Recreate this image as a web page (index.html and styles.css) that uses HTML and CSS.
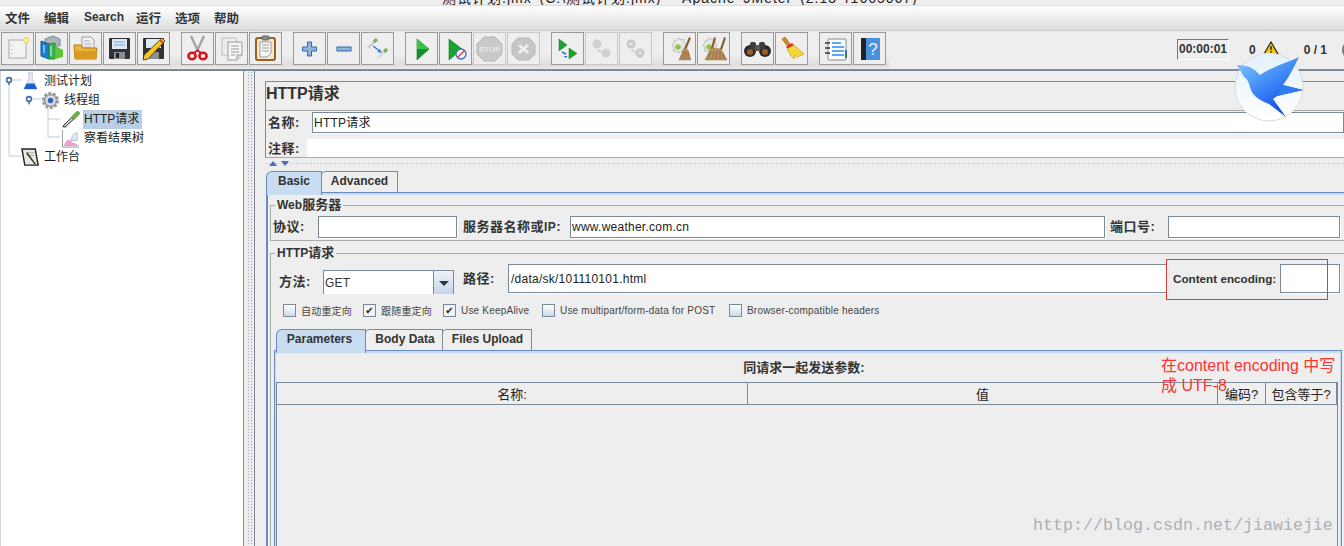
FILE: index.html
```html
<!DOCTYPE html>
<html lang="zh">
<head>
<meta charset="utf-8">
<title>JMeter HTTP请求</title>
<link rel="stylesheet" href="styles.css">
</head>
<body>
<div class="app">
  <div class="titlebar"><span class="titletext">测试计划.jmx (C:\测试计划.jmx) - Apache JMeter (2.13 r1665067)</span></div>
  <nav class="menubar">
    <span>文件</span><span>编辑</span><span class="menulat">Search</span><span>运行</span><span>选项</span><span>帮助</span>
  </nav>
  <div class="toolbar">
    <div class="tools">
    <div class="group">
      <button class="tb"><svg viewBox="0 0 31 31"><rect x="7" y="7" width="17" height="18" fill="#f3f3ef" stroke="#a8a8a8"/><path d="M10 12v1M10 16v1M10 20v1" stroke="#999"/><circle cx="24" cy="7" r="2.6" fill="#fff3a0" stroke="#e8cf50"/></svg></button>
      <button class="tb"><svg viewBox="0 0 31 31"><path d="M9 6l8-3 7 3v7H9z" fill="#a9b4ba" stroke="#7f8c92"/><path d="M5 8l8 3v15l-8-3z" fill="#1b7fd0" stroke="#0f5a9c"/><path d="M13 11l6-1v16l-6 0z" fill="#39b54a" stroke="#1f8a34"/><path d="M19 13l8 4v7l-8 2z" fill="#64c23a"/><path d="M8 12v8M15 13v10" stroke="#d8f0ff"/></svg></button>
      <button class="tb"><svg viewBox="0 0 31 31"><path d="M12 4h9l3 3v10H12z" fill="#f4f4f4" stroke="#999"/><path d="M14 8h6M14 11h8M14 14h8" stroke="#aaa"/><path d="M4 12h7l2 3h14l-1 11H5z" fill="#eeb23a" stroke="#b97c16"/><path d="M4 18h23l-1 8H5z" fill="#d99a25"/></svg></button>
      <button class="tb"><svg viewBox="0 0 31 31"><rect x="5" y="5" width="21" height="21" rx="1" fill="#2f3338"/><rect x="8" y="6" width="15" height="10" fill="#dfe9f5"/><path d="M10 9h11M10 12h11" stroke="#7aa6d6"/><rect x="10" y="19" width="11" height="7" fill="#8a8f94"/><rect x="12" y="20" width="3" height="5" fill="#222"/></svg></button>
      <button class="tb"><svg viewBox="0 0 31 31"><rect x="5" y="5" width="21" height="21" rx="1" fill="#2f3338"/><rect x="8" y="6" width="15" height="9" fill="#dfe9f5"/><rect x="10" y="19" width="11" height="7" fill="#8a8f94"/><path d="M24 5l3 3-17 18-5 1 1-5z" fill="#f3c522" stroke="#3a2c10" stroke-width=".8"/><path d="M22 7l3 3" stroke="#d8482c" stroke-width="2"/></svg></button>
    </div>
    <div class="group">
      <button class="tb"><svg viewBox="0 0 31 31"><path d="M9 3l7 15M22 3l-7 15" stroke="#a4a4a4" stroke-width="2.4"/><path d="M16 17l-4 3M15 17l4 3" stroke="#c22" stroke-width="2"/><ellipse cx="10" cy="23" rx="3.6" ry="3.2" fill="none" stroke="#d4141c" stroke-width="2.6"/><ellipse cx="21" cy="23" rx="3.6" ry="3.2" fill="none" stroke="#d4141c" stroke-width="2.6"/></svg></button>
      <button class="tb"><svg viewBox="0 0 31 31"><rect x="6" y="5" width="14" height="17" fill="#efefef" stroke="#bbb"/><path d="M8 9h10M8 12h10M8 15h8" stroke="#ddd"/><path d="M12 9h14v13l-5 5h-9z" fill="#f6f6f6" stroke="#999"/><path d="M15 13h8M15 16h8M15 19h8M15 22h4" stroke="#999"/><path d="M21 27v-5h5" fill="#ddd" stroke="#999"/></svg></button>
      <button class="tb"><svg viewBox="0 0 31 31"><rect x="6" y="5" width="19" height="22" rx="2" fill="#f0e8d8" stroke="#9a5f1a" stroke-width="2"/><rect x="12" y="3" width="7" height="4" rx="1" fill="#888" stroke="#666"/><path d="M10 9h11v11l-4 4h-7z" fill="#f8f8f8" stroke="#999"/><path d="M12 12h7M12 15h7M12 18h7" stroke="#999"/></svg></button>
    </div>
    <div class="group">
      <button class="tb"><svg viewBox="0 0 31 31"><path d="M13.500 9h4v5h5v4h-5v5h-4v-5h-5v-4h5z" fill="#8fb4dd" stroke="#3468ab"/></svg></button>
      <button class="tb"><svg viewBox="0 0 31 31"><rect x="9" y="14" width="14" height="4" fill="#8fb4dd" stroke="#3468ab"/></svg></button>
      <button class="tb"><svg viewBox="0 0 31 31"><path d="M6 15l7-7" stroke="#cfcfcf" stroke-width="2.400"/><path d="M12 9l3-3" stroke="#7fb060" stroke-width="3.400"/><path d="M16 25l7-7" stroke="#d8d8d8" stroke-width="2.400"/><path d="M22 19l3-3" stroke="#7fb060" stroke-width="3.400"/><path d="M11 13l6 4.500" stroke="#2d7fe6" stroke-width="1.400"/><path d="M20 20l-5-1 3-3z" fill="#2d7fe6"/></svg></button>
    </div>
    <div class="group">
      <button class="tb"><svg viewBox="0 0 31 31"><path d="M11 6l12 10-12 11z" fill="#12922a" stroke="#0d7a1e" stroke-width=".6"/><path d="M11 6l12 10H11z" fill="#3dc04a"/></svg></button>
      <button class="tb"><svg viewBox="0 0 31 31"><path d="M9 6l13 10-13 11z" fill="#18a32a" stroke="#0d7a1e" stroke-width=".6"/><circle cx="21" cy="21" r="5" fill="#eef" stroke="#3d6fc4" stroke-width="1.300"/><path d="M17.500 24.500l7-7" stroke="#d9342c" stroke-width="1.300"/></svg></button>
      <button class="tb off"><svg viewBox="0 0 31 31"><path d="M10 4h11l7 7v10l-7 7H10l-7-7V11z" fill="#c9c9c9" stroke="#b5b5b5"/><text x="15.500" y="19" class="stoptxt">STOP</text></svg></button>
      <button class="tb off"><svg viewBox="0 0 31 31"><path d="M10 5h11l6 6v10l-6 6H10l-6-6V11z" fill="#c6c6c6" stroke="#b8b8b8"/><path d="M11 12l9 8M20 12l-9 8" stroke="#f0f0f0" stroke-width="3"/></svg></button>
    </div>
    <div class="group">
      <button class="tb"><svg viewBox="0 0 31 31"><path d="M7 6l8 6-8 6z" fill="#1ba52c" stroke="#0d7a1e" stroke-width=".5"/><path d="M17 15l8 5.500-8 5.500z" fill="#1ba52c" stroke="#0d7a1e" stroke-width=".5"/><path d="M10 19l4 2" stroke="#2d6fd6" stroke-width="1.600"/><path d="M11 23h4v2z" fill="#2d6fd6"/></svg></button>
      <button class="tb off"><svg viewBox="0 0 31 31"><circle cx="11" cy="11" r="4.500" fill="#d0d0d0"/><circle cx="20" cy="20" r="4.500" fill="#d0d0d0"/><path d="M12 17l3 2" stroke="#c4c4c4" stroke-width="1.500"/></svg></button>
      <button class="tb off"><svg viewBox="0 0 31 31"><circle cx="11" cy="11" r="4.500" fill="#c8c8c8"/><circle cx="20" cy="20" r="4.500" fill="#c8c8c8"/><path d="M9 9l4 4M13 9l-4 4M18 18l4 4M22 18l-4 4" stroke="#eee"/><path d="M12 17l3 2" stroke="#c4c4c4" stroke-width="1.500"/></svg></button>
    </div>
    <div class="group">
      <button class="tb"><svg viewBox="0 0 31 31"><path d="M10 8l3-1 1-2 3 2 3-1v4l2 2-2 3 1 3-4 0-2 2-2-2-4 0 1-3-2-3 2-2z" fill="#e8e8e8" stroke="#bdbdbd"/><circle cx="14" cy="14" r="2.800" fill="#8ec63f"/><path d="M25 4l2 1-5 12-2-1z" fill="#8a6232"/><path d="M20 15l4 2 3 10H15z" fill="#bd9160" stroke="#96703f" stroke-width=".5"/><path d="M20 18l-2 8M22 18l-1 8M24 19v7" stroke="#7d5a2e" stroke-width=".7"/></svg></button>
      <button class="tb"><svg viewBox="0 0 31 31"><path d="M7 8l3-1 1-2 3 2 3-1v4l2 2-2 3 1 3-4 0-2 2-2-2-4 0 1-3-2-3 2-2z" fill="#e8e8e8" stroke="#bdbdbd"/><circle cx="11" cy="14" r="2.800" fill="#8ec63f"/><path d="M16 4l2 1-3 11-2-1zM26 4l2 1-4 12-2-1z" fill="#8a6232"/><path d="M13 15l10 1 6 11H7z" fill="#bd9160" stroke="#96703f" stroke-width=".5"/><path d="M13 18l-3 8M16 18l-2 8M19 18l-1 8M22 18v8M25 20l1 6" stroke="#7d5a2e" stroke-width=".7"/></svg></button>
    </div>
    <div class="group">
      <button class="tb"><svg viewBox="0 0 31 31"><circle cx="8" cy="18" r="6" fill="#2a2a2a"/><circle cx="23" cy="18" r="6" fill="#2a2a2a"/><rect x="8" y="9" width="6" height="8" rx="2" fill="#3c3c3c"/><rect x="17" y="9" width="6" height="8" rx="2" fill="#3c3c3c"/><rect x="13" y="12" width="5" height="6" fill="#555"/><circle cx="8" cy="19" r="3" fill="#9c5a24"/><circle cx="23" cy="19" r="3" fill="#9c5a24"/></svg></button>
      <button class="tb"><svg viewBox="0 0 31 31"><path d="M6 6l3-2 6 8-3 2z" fill="#c98b2a" stroke="#9a6518" stroke-width=".6"/><path d="M10 14l6-4 2 2-6 4z" fill="#d9252a"/><path d="M11 16l7-4 10 9-7 3-2-2-1 4-3-3z" fill="#f4d63a" stroke="#c8a414" stroke-width=".7"/></svg></button>
    </div>
    <div class="group">
      <button class="tb"><svg viewBox="0 0 31 31"><rect x="8" y="6" width="18" height="21" rx="1" fill="#fbfbfb" stroke="#888"/><path d="M12 10h9M12 14h12M12 18h12M12 22h12" stroke="#2d8cf0" stroke-width="1.300"/><path d="M5 10h5M5 15h5M5 20h5" stroke="#333" stroke-width="1.300"/><rect x="25" y="17" width="2" height="4" fill="#2d6fd6"/><rect x="25" y="21" width="2" height="4" fill="#1f8a34"/></svg></button>
      <button class="tb"><svg viewBox="0 0 31 31"><rect x="7" y="5" width="6" height="22" fill="#1f2428"/><rect x="12" y="5" width="14" height="22" fill="#4a90dc"/><text x="19" y="22" class="helptxt">?</text></svg></button>
    </div>
    </div>
    <div class="status">
      <span class="timer">00:00:01</span>
      <span class="warncount">0</span>
      <svg class="warn" viewBox="0 0 16 14"><path d="M8 1l7 12H1z" fill="#f5c518" stroke="#222" stroke-width="1.200"/><path d="M8 5v4M8 10v2" stroke="#222" stroke-width="1.400"/></svg>
      <span class="threads">0 / 1</span>
      <span class="lamp"></span>
    </div>
  </div>

  <main class="main">
    <aside class="tree">
      <svg class="treelines" viewBox="0 0 90 100"><path d="M8 12V85H20M47 37V66H59M47 48H59M28 28V35M11 9H21M31 28H40" fill="none" stroke="#b7cde3"/><path d="M8 9V14M28 28V33" stroke="#3f6db0" stroke-width="1.400"/><circle cx="8" cy="9" r="2.400" fill="#fff" stroke="#3f6db0" stroke-width="1.600"/><circle cx="28" cy="28" r="2.400" fill="#fff" stroke="#3f6db0" stroke-width="1.600"/></svg>
      <div class="node lv0"><svg class="ico" viewBox="0 0 20 20"><path d="M8 0h4v7l5 11H3L8 7z" fill="#e4e8ee" stroke="#b0b6c0" stroke-width=".6"/><path d="M6 12h8l3 6H3z" fill="#1d5fd0"/></svg><span>测试计划</span></div>
      <div class="node lv1"><svg class="ico" viewBox="0 0 20 20"><circle cx="10" cy="10" r="7.500" fill="#c8c8c8" stroke="#999" stroke-width="3" stroke-dasharray="3 1.700"/><circle cx="10" cy="10" r="6" fill="#dcdcdc" stroke="#8a8a8a"/><circle cx="10" cy="10" r="3.500" fill="#2c64b8" stroke="#dfe9f5"/></svg><span>线程组</span></div>
      <div class="node lv2"><svg class="ico" viewBox="0 0 20 20"><path d="M1 18h6" stroke="#bbb"/><path d="M2 17l9-9 2 2-9 8z" fill="#cfcfcf" stroke="#2a2a2a"/><path d="M11 7l5-5a2 2 0 013 3l-5 5z" fill="#6cb04a" stroke="#4a8a30" stroke-width=".5"/></svg><span class="sel">HTTP请求</span></div>
      <div class="node lv2"><svg class="ico" viewBox="0 0 20 20"><path d="M1.500 1v18H19" fill="none" stroke="#999"/><path d="M3 18c2-7 6-8 8-5s5 1 7 5z" fill="#f29fcb"/><path d="M11 12c0-5 3-8 6-8v8z" fill="#dcecfa" stroke="#86a9cf" stroke-width=".7"/></svg><span>察看结果树</span></div>
      <div class="node lv0b"><svg class="ico" viewBox="0 0 20 20"><path d="M1 1h14l3 17H4z" fill="#e9e9e2" stroke="#222" stroke-width="1.500"/><path d="M6 5h8M6 8h8" stroke="#aaa"/><path d="M6 5l9 12" stroke="#333" stroke-width="1.600"/></svg><span>工作台</span></div>
    </aside>
    <div class="splitter"></div>
    <section class="right">
      <header class="head">
        <h1 class="title">HTTP请求</h1>
        <div class="namerow"><label>名称:</label><div class="field">HTTP请求</div></div>
        <div class="noterow"><label>注释:</label><div class="notefield"></div></div>
      </header>
      <div class="hsplit"><i class="up"></i><i class="down"></i></div>
      <div class="tabs"><span class="tab on basic">Basic</span><span class="tab adv">Advanced</span></div>
      <div class="pane">
        <fieldset class="box">
          <legend><span class="lat">Web</span>服务器</legend>
          <div class="row1">
            <label>协议:</label><div class="field"></div>
            <label>服务器名称或<span class="lat">IP</span>:</label><div class="field">www.weather.com.cn</div>
            <label>端口号:</label><div class="field"></div>
          </div>
        </fieldset>
        <fieldset class="box open">
          <legend><span class="lat">HTTP</span>请求</legend>
          <div class="row2">
            <label class="method">方法:</label>
            <div class="combo"><span class="combotext">GET</span><span class="arrow"></span></div>
            <label>路径:</label><div class="field">/data/sk/101110101.html</div>
            <label class="latin">Content encoding:</label><div class="field"></div>
          </div>
          <div class="checks">
            <span class="chk"><i></i>自动重定向</span>
            <span class="chk on"><i>✔</i>跟随重定向</span>
            <span class="chk on"><i>✔</i>Use KeepAlive</span>
            <span class="chk"><i></i>Use multipart/form-data for POST</span>
            <span class="chk"><i></i>Browser-compatible headers</span>
          </div>
          <div class="tabs inner"><span class="tab on t1">Parameters</span><span class="tab t2">Body Data</span><span class="tab t3">Files Upload</span></div>
          <div class="pane2">
            <div class="caption">同请求一起发送参数:</div>
            <div class="table">
              <div class="thead"><span>名称:</span><span>值</span><span>编码?</span><span>包含等于?</span></div>
              <div class="tbody"></div>
            </div>
          </div>
        </fieldset>
      </div>
    </section>
  </main>

  <div class="redbox"></div>
  <div class="note">在content encoding 中写<br>成 UTF-8</div>
  <div class="mark">http://blog.csdn.net/jiawiejie</div>
  <svg class="bird" viewBox="0 0 70 70">
    <defs><linearGradient id="bg" x1="0" y1="0" x2="0" y2="1"><stop offset="0" stop-color="#e2f1fd"/><stop offset="1" stop-color="#fff"/></linearGradient>
    <linearGradient id="bb" x1="0" y1="0" x2=".7" y2="1"><stop offset="0" stop-color="#86ccff"/><stop offset=".55" stop-color="#3a84f5"/><stop offset="1" stop-color="#0f3fe8"/></linearGradient></defs>
    <circle cx="35" cy="35" r="34" fill="url(#bg)" stroke="#dcdcdc"/>
    <path d="M3 13c6 0 12 1 16 4 3 2 5 4 7 6C38 15 52 11 65 5 60 15 55 25 49 33l20 5-26 6-4 3 13 18-17-13c-8-3-15-7-18-14-2-6-3-11-7-13z" fill="url(#bb)"/>
    <path d="M49 33l20 5-26 6z" fill="#2f7bf0"/>
  </svg>
</div>
</body>
</html>
```
FILE: styles.css
```css
* { box-sizing: border-box; }
html, body { margin: 0; padding: 0; height: 100%; overflow: hidden; }
body {
  background: #eee;
  color: #333;
  font: 12px "Liberation Sans", "Noto Sans CJK SC", sans-serif;
}
.app { position: relative; width: 1344px; height: 546px; overflow: hidden; }
.lat { font-size: 12px; }

.titlebar {
  height: 6px;
  border-bottom: 1px solid #ddd;
  padding-left: 442px;
  overflow: hidden;
  display: flex;
  align-items: flex-end;
}
.titletext {
  font-size: 14px;
  line-height: 14px;
  color: #222;
  white-space: nowrap;
  word-spacing: 3px;
  letter-spacing: 1px;
}

.menubar {
  height: 25px;
  display: flex;
  gap: 14px;
  align-items: center;
  padding: 0 0 2px 5px;
  background: linear-gradient(#fff, #ddd);
  border-bottom: 1px solid #ccc;
  font-weight: 700;
  font-size: 12.500px;
}
.menubar .menulat { font-size: 12px; margin: 0 -2px 0 1px; }

.toolbar {
  height: 40px;
  display: flex;
  border-bottom: 2px solid #7a8a99;
}
.tools {
  display: flex;
  gap: 11px;
  width: 889px;
  flex: none;
  padding: 1px 0 0 1px;
  background: linear-gradient(#eee 60%, #dcdcdc 92%, #eee);
}
.group { display: flex; gap: 1px; height: 33px; }
.tb {
  width: 33px;
  height: 33px;
  padding: 0;
  margin: 0;
  background: #eee;
  border: 1px solid #9a9a9a;
  display: block;
}
.tb svg { display: block; width: 31px; height: 31px; }
.tb.off { border-color: #c8c8c8; }
.stoptxt { font: 700 8px "Liberation Sans", sans-serif; fill: #e8e8e8; text-anchor: middle; }
.helptxt { font: 17px "Liberation Sans", sans-serif; fill: #e8f2ff; text-anchor: middle; }

.status {
  margin-left: 288px;
  display: flex;
  align-items: flex-start;
  font-weight: 700;
  white-space: nowrap;
  color: #333;
  flex: none;
}
.timer {
  width: 52px;
  height: 21px;
  margin-top: 8px;
  border: 1px solid;
  border-color: #777 #fff #fff #777;
  line-height: 19px;
  text-align: center;
}
.warncount { margin: 12px 0 0 20px; line-height: 14px; }
.warn { width: 16px; height: 14px; margin: 10px 0 0 7px; }
.threads { margin: 12px 0 0 25px; line-height: 14px; }
.lamp { width: 20px; height: 20px; border-radius: 50%; margin: 9px 0 0 15px; background: #aaa; border: 2px solid #777; flex: none; }

.main { display: flex; height: 475px; }
.tree {
  position: relative;
  width: 244px;
  flex: none;
  background: #fff;
  border-right: 1px solid #7a8a99;
  border-left: 1px solid #cfd6dd;
  padding-top: 1px;
}
.treelines { position: absolute; left: 0; top: 0; width: 90px; height: 100px; }
.node {
  position: relative;
  height: 19px;
  display: flex;
  align-items: center;
  gap: 3px;
  white-space: nowrap;
  color: #222;
}
.node span { line-height: 19px; padding: 0 1px; }
.node .sel { background: #b8cfe5; padding-right: 3px; }
.ico { width: 19px; height: 19px; flex: none; }
.lv0 { padding-left: 20px; }
.lv1 { padding-left: 40px; }
.lv2 { padding-left: 60px; }
.lv0b { padding-left: 20px; }

.splitter {
  width: 10px;
  flex: none;
  background:
    radial-gradient(circle, #9aa5b0 0.6px, transparent 0.8px) 0 0 / 3px 3px;
  background-clip: content-box;
  padding: 0 2px 0 3px;
}

.right {
  flex: 1;
  min-width: 0;
  border-left: 1px solid #7a8a99;
  padding: 10px 0 0 10px;
  overflow: hidden;
}
.head {
  border-top: 1px solid #7a8a99;
  border-left: 1px solid #7a8a99;
  border-bottom: 1px solid #aaa;
  height: 77px;
}
.title {
  margin: 0;
  height: 29px;
  border-bottom: 1px solid #aaa;
  font-size: 16px;
  line-height: 24px;
  font-weight: 700;
}
.namerow { display: flex; padding: 1px 0 0 2px; height: 28px; }
.namerow label, .noterow label { font-weight: 700; white-space: nowrap; font-size: 13px; letter-spacing: .5px; }
.namerow label { width: 44px; line-height: 21px; }
.namerow .field { flex: 1; height: 21px; line-height: 20px; }
.noterow { display: flex; padding-left: 2px; height: 18px; }
.noterow label { width: 39px; line-height: 19px; }
.notefield { flex: 1; background: #fff; }

.field {
  background: #fff;
  border: 1px solid #7a8a99;
  box-shadow: 1px 1px 0 #fff;
  padding-left: 1px;
  white-space: nowrap;
  overflow: hidden;
  color: #222;
  font-size: 12px;
  letter-spacing: 0.25px;
}

.hsplit {
  height: 13px;
  display: flex;
  gap: 4px;
  padding: 3px 0 0 4px;
  background:
    radial-gradient(circle, #a8b0b8 0.6px, transparent 0.8px) 0 4px / 3px 3px repeat-x;
}
.hsplit i { width: 0; height: 0; border: 4px solid transparent; border-top: 0; border-bottom: 5px solid #4a70b8; }
.hsplit .down { border-bottom: 0; border-top: 5px solid #4a70b8; }

.tabs { display: flex; height: 21px; margin-left: 1px; position: relative; z-index: 1; }
.tab {
  height: 21px;
  line-height: 19px;
  font-weight: 700;
  text-align: center;
  border: 1px solid #7a8a99;
  border-bottom: 0;
  margin-left: -1px;
  border-top-left-radius: 5px;
  color: #333;
}
.tab.on {
  background: #c8ddf2;
  border-color: #6a8ac4;
  height: 24px;
  margin-left: 0;
  border-top-left-radius: 6px;
  position: relative;
  z-index: 1;
}
.basic { width: 56px; }
.adv { width: 77px; }
.t1 { width: 90px; padding-right: 3px; }
.t2 { width: 78px; padding-left: 2px; }
.t3 { width: 90px; padding-left: 1px; }

.pane {
  margin-left: 1px;
  border-top: 1px solid #6a8ac4;
  border-left: 2px solid #6a8ac4;
  box-shadow: inset 0 2px 0 #c8ddf2;
  padding: 4px 0 0 2px;
  height: 360px;
}
.box {
  margin: 0;
  padding: 3px 0 3px 2px;
  border: 1px solid #aaa;
  border-right: 0;
  min-width: 0;
}
.box legend {
  margin-left: 2px;
  padding: 0 2px;
  font-weight: 700;
  line-height: 16px;
  height: 16px;
  font-size: 13px;
}
.box.open legend { margin-left: 4px; }
.open { margin-top: 4px; border-bottom: 0; padding: 3px 0 0 0; height: 320px; }
.row1 {
  display: grid;
  grid-template-columns: 45px 139px 113px 535px 63px 172px;
  height: 21px;
}
.row1 label, .row2 label { font-weight: 700; line-height: 21px; white-space: nowrap; font-size: 13px; letter-spacing: .5px; }
.row1 label:nth-of-type(2) { padding-left: 6px; }
.row1 label:nth-of-type(3) { padding-left: 5px; }
.row1 .field { line-height: 21px; }

.row2 {
  display: grid;
  grid-template-columns: 44px 131px 54px 659px 113px 60px;
  padding-left: 8px;
  height: 30px;
}
.row2 label { line-height: 29px; padding-left: 9px; }
.row2 label.method { padding-left: 0; margin-top: 5px; line-height: 25px; }
.row2 label.latin { padding-left: 6px; font-size: 11.700px; letter-spacing: 0; }
.row2 .field { height: 29px; line-height: 29px; padding-left: 2px; }
.combo {
  margin-top: 6px;
  height: 24px;
  display: flex;
  background: #fff;
  border: 1px solid #7a8a99;
  border-bottom: 0;
}
.combotext { flex: 1; line-height: 24px; padding-left: 1px; letter-spacing: 0.25px; }
.arrow {
  width: 20px;
  border-left: 1px solid #7a8a99;
  background: linear-gradient(#eef3f9, #c4d6ea);
  position: relative;
}
.arrow::after {
  content: "";
  position: absolute;
  left: 5px;
  top: 10px;
  border: 5px solid transparent;
  border-bottom: 0;
  border-top: 5px solid #333;
}

.checks {
  display: grid;
  grid-template-columns: 80px 80px 99px 187px auto;
  padding-left: 12px;
  margin-top: 9px;
  height: 14px;
}
.chk {
  display: flex;
  align-items: center;
  gap: 5px;
  font-size: 10px;
  color: #444;
  white-space: nowrap;
  letter-spacing: 0.2px;
}
.chk i {
  width: 13px;
  height: 13px;
  border: 1px solid #7a8a99;
  background: linear-gradient(#fff, #c9d9ea);
  font: 700 10px/11px "DejaVu Sans", sans-serif;
  text-align: center;
  color: #222;
  letter-spacing: 0;
  flex: none;
}
.chk.on i { background: #eef3f9; }

.inner { margin: 12px 0 0 5px; }
.pane2 {
  margin: 0 2px 0 3px;
  border-top: 1px solid #6a8ac4;
  border-left: 1px solid #6a8ac4;
  border-right: 1px solid #6a8ac4;
  box-shadow: inset 1px 2px 0 #c8ddf2, inset -1px 0 0 #c8ddf2;
  height: 220px;
  padding: 3px 3px 0 1px;
}
.caption {
  height: 28px;
  line-height: 28px;
  font-weight: 700;
  font-size: 13px;
  text-align: center;
  padding-right: 6px;
}
.table {
  border: 1px solid #7a8a99;
  border-bottom: 0;
  height: 200px;
}
.thead {
  display: grid;
  grid-template-columns: 471px 470px 48px 1fr;
  grid-template-rows: 21px;
  height: 22px;
  border-bottom: 1px solid #7a8a99;
}
.thead span {
  text-align: center;
  line-height: 23px;
  font-size: 13px;
  border-right: 1px solid #7a8a99;
  color: #222;
}

.redbox {
  position: absolute;
  left: 1166px;
  top: 259px;
  width: 162px;
  height: 41px;
  border: 1px solid #ee3333;
}
.note {
  position: absolute;
  left: 1161px;
  top: 356px;
  width: 180px;
  color: #f33;
  font-size: 16px;
  line-height: 20px;
  white-space: nowrap;
}
.mark {
  position: absolute;
  left: 1033px;
  top: 516px;
  font: 16.670px/20px "Liberation Mono", monospace;
  color: #aab0b8;
  white-space: nowrap;
}
.bird { position: absolute; left: 1234px; top: 52px; width: 70px; height: 70px; }
```
